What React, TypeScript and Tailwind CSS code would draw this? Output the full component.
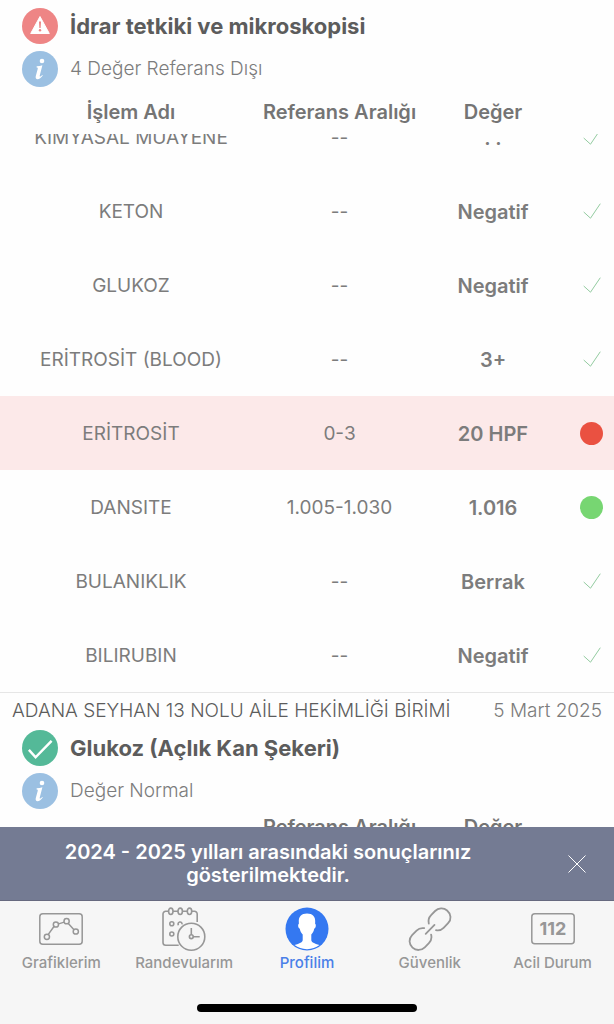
import type { ReactNode } from "react";

type Status = "check" | "red" | "green";

interface ResultRow {
  name: string;
  range: string;
  value: string;
  status: Status;
}

const urineResults: ResultRow[] = [
  { name: "KIMYASAL MUAYENE", range: "--", value: ". .", status: "check" },
  { name: "KETON", range: "--", value: "Negatif", status: "check" },
  { name: "GLUKOZ", range: "--", value: "Negatif", status: "check" },
  { name: "ERİTROSİT (BLOOD)", range: "--", value: "3+", status: "check" },
  { name: "ERİTROSİT", range: "0-3", value: "20 HPF", status: "red" },
  { name: "DANSITE", range: "1.005-1.030", value: "1.016", status: "green" },
  { name: "BULANIKLIK", range: "--", value: "Berrak", status: "check" },
  { name: "BILIRUBIN", range: "--", value: "Negatif", status: "check" },
];

function WarningIcon() {
  return (
    <svg viewBox="0 0 36 36" className="size-9 shrink-0" aria-hidden="true">
      <circle cx="18" cy="18" r="18" fill="#ee8585" />
      <path d="M18 8.5 27.3 25.5H8.7Z" fill="#fff" stroke="#fff" strokeWidth="1" strokeLinejoin="round" />
      <path d="M17 13.5h2l-.4 6.5h-1.2z" fill="#ee8585" />
      <circle cx="18" cy="22.3" r="1.2" fill="#ee8585" />
    </svg>
  );
}

function InfoIcon() {
  return (
    <svg viewBox="0 0 36 36" className="size-9 shrink-0" aria-hidden="true">
      <circle cx="18" cy="18" r="18" fill="#9bc0e2" />
      <circle cx="20" cy="10" r="2.3" fill="#fff" />
      <path
        d="M14.8 15.2c2-.1 3.8-.4 5.6-1l-2.7 10.5c-.3 1.2.6 1.2 2.5-.7l.6.6c-1.8 2.4-3.5 3.6-5.2 3.6-1.7 0-2.3-1.2-1.8-3.1l1.9-7.2c.3-1.2-.1-1.6-1.3-1.7z"
        fill="#fff"
      />
    </svg>
  );
}

function SuccessIcon() {
  return (
    <svg viewBox="0 0 36 36" className="size-9 shrink-0" aria-hidden="true">
      <circle cx="18" cy="18" r="18" fill="#54b998" />
      <path d="M6.9 19.900 13.600 27.300 29.600 10.900" fill="none" stroke="#fff" strokeWidth="2.500" />
    </svg>
  );
}

function StatusMark({ status }: { status: Status }) {
  if (status === "check") {
    return (
      <svg viewBox="0 0 18 16" className="mx-auto h-4 w-[18px]" fill="none" stroke="#93cba0" aria-label="Normal">
        <path d="M.7 9 7.5 15.2 17.3.7" />
      </svg>
    );
  }
  return (
    <span className={`mx-auto block size-[23px] rounded-full ${status === "red" ? "bg-[#ea5141]" : "bg-[#77d672]"}`} />
  );
}

function TableHead({ compact = false }: { compact?: boolean }) {
  return (
    <thead className="block">
      <tr className={`table w-full table-fixed text-xl text-[#747474] ${compact ? "h-9" : "h-11"}`}>
        <th scope="col" className="font-semibold">{!compact && "İşlem Adı"}</th>
        <th scope="col" className="w-[155px] font-semibold whitespace-nowrap">Referans Aralığı</th>
        <th scope="col" className="w-[152px] font-semibold">Değer</th>
        <td className="w-[45px]" />
      </tr>
    </thead>
  );
}

function ResultTitle({ icon, title, note }: { icon: ReactNode; title: string; note: string }) {
  return (
    <div className="flex flex-col gap-[7px] pl-[22px]">
      <div className="flex items-center gap-3">
        {icon}
        <h2 className="text-[22px] leading-7 font-bold text-[#5c5c5c]">{title}</h2>
      </div>
      <div className="flex items-center gap-3">
        <InfoIcon />
        <p className="text-[19px] leading-7 font-light text-[#7c7c7c]">{note}</p>
      </div>
    </div>
  );
}

function ChartIcon() {
  return (
    <svg viewBox="0 0 44 44" className="size-11" fill="none" stroke="currentColor" strokeWidth="1.5" aria-hidden="true">
      <rect x=".8" y="6.8" width="42.4" height="30.4" rx="3" />
      <path d="m9.3 27.4 6.2-8.6M19.6 16.9l5.6-1.8M29.3 16.5l5.7 6.3" />
      <circle cx="7.9" cy="29.8" r="2.6" />
      <circle cx="16.9" cy="17.5" r="2.6" />
      <circle cx="27.6" cy="14.2" r="2.6" />
      <circle cx="36.8" cy="24.5" r="2.6" />
    </svg>
  );
}

function CalendarIcon() {
  return (
    <svg viewBox="0 0 44 44" className="size-11" fill="none" stroke="currentColor" strokeWidth="1.6" aria-hidden="true">
      <path d="M6.6 4.3H3.7A2.7 2.7 0 0 0 1 7v28.6a2.7 2.7 0 0 0 2.7 2.7h13M11 4.3h5M20.4 4.3h4.9M29.7 4.3h2.8A2.7 2.7 0 0 1 35.2 7v8" />
      <ellipse cx="8.8" cy="4.3" rx="2.2" ry="3.2" />
      <ellipse cx="18.2" cy="4.3" rx="2.2" ry="3.2" />
      <ellipse cx="27.5" cy="4.3" rx="2.2" ry="3.2" />
      <circle cx="9.8" cy="16.7" r="2" />
      <circle cx="9.8" cy="27" r="2" />
      <path d="M16.5 18.2a2 2 0 1 1 3.5-.8" />
      <circle cx="29.3" cy="29.7" r="13.5" />
      <circle cx="29.3" cy="29.7" r="1.9" />
      <path d="M29.3 27.8v-6.8M31.2 29.7h6.5" />
    </svg>
  );
}

function ProfileIcon() {
  return (
    <svg viewBox="0 0 44 44" className="size-11" aria-hidden="true">
      <circle cx="22" cy="22" r="21.5" fill="#3478f1" />
      <path
        d="M22 6.5c-5.6 0-8.500 3.200-8.200 8.200l.1 2c-1.200.5-.9 4.200.9 5 .4 2.500 1.400 4.400 2.900 5.700v5.600c0 2.400-2.900 3.300-8.200 5.100A20.300 20.300 0 0 0 22 42.200a20.300 20.300 0 0 0 12.500-4.100c-5.300-1.800-8.200-2.700-8.200-5.100v-5.600c1.500-1.300 2.500-3.200 2.900-5.700 1.800-.8 2.100-4.500.9-5l.1-2c.3-5-2.600-8.200-8.200-8.200Z"
        fill="#fff"
      />
    </svg>
  );
}

function LinkIcon() {
  return (
    <svg viewBox="0 0 44 44" className="size-11" fill="none" stroke="currentColor" strokeWidth="1.8" strokeLinecap="round" aria-hidden="true">
      <path d="M20.8 16.6c-.7-3.1-.1-6.1 2.3-8.5l4-4.1c3.2-3.2 8.5-3.600 12-.5 4.2 3.6 4.5 9 1 12.7l-4.5 4.7c-2.2 2.2-5 2.9-7.6 2.3" />
      <path d="M16.2 21.2c-2.7-.5-5.5.2-7.6 2.4l-4.5 4.6c-3.5 3.7-3.3 9.1.4 12.5 3.6 3.2 8.9 3 12.3-.4l4.1-4.2c2.4-2.4 3-5.5 2.2-8.5" />
      <path d="m17.7 26.9 8.8-9" />
    </svg>
  );
}

function EmergencyIcon() {
  return (
    <svg viewBox="0 0 44 44" className="size-11" aria-hidden="true">
      <rect x=".8" y="6.8" width="42.4" height="30" rx="3" fill="none" stroke="currentColor" strokeWidth="1.5" />
      <text x="22" y="28" textAnchor="middle" fontSize="18" fontWeight="700" fill="currentColor">
        112
      </text>
    </svg>
  );
}

const tabs = [
  { label: "Grafiklerim", icon: <ChartIcon /> },
  { label: "Randevularım", icon: <CalendarIcon /> },
  { label: "Profilim", icon: <ProfileIcon />, active: true },
  { label: "Güvenlik", icon: <LinkIcon /> },
  { label: "Acil Durum", icon: <EmergencyIcon /> },
];

export default function App() {
  return (
    <div className="flex h-screen flex-col overflow-hidden bg-[#fefefe] font-[Inter,sans-serif]">
      <main className="min-h-0 flex-1 overflow-hidden">
        <section className="border-b border-[#e6e6e6] pt-2">
          <ResultTitle icon={<WarningIcon />} title="İdrar tetkiki ve mikroskopisi" note="4 Değer Referans Dışı" />
          <table className="mt-[3px] block w-full">
            <TableHead />
            <tbody className="flex h-[558px] flex-col justify-end overflow-hidden">
              {urineResults.map((row) => (
                <tr
                  key={row.name}
                  className={`table h-[74px] w-full shrink-0 table-fixed text-center text-[19px] leading-7 text-[#7c7c7c] ${
                    row.status === "red" ? "bg-[#fce9e9]" : ""
                  }`}
                >
                  <td className="pt-0.5">{row.name}</td>
                  <td className="w-[155px] pt-0.5">{row.range}</td>
                  <td className="w-[152px] pt-0.5 text-xl font-semibold">{row.value}</td>
                  <td className="w-[45px]">
                    <StatusMark status={row.status} />
                  </td>
                </tr>
              ))}
            </tbody>
          </table>
        </section>

        <section>
          <div className="flex items-center justify-between px-3 pt-1 pb-[5px] text-[19px] leading-7 font-light">
            <p className="text-[#5c5c5c]">ADANA SEYHAN 13 NOLU AİLE HEKİMLİĞİ BİRİMİ</p>
            <time dateTime="2025-03-05" className="text-[#7c7c7c]">5 Mart 2025</time>
          </div>
          <ResultTitle icon={<SuccessIcon />} title="Glukoz (Açlık Kan Şekeri)" note="Değer Normal" />
          <table className="block w-full">
            <TableHead compact />
          </table>
        </section>
      </main>

      <div className="flex shrink-0 items-center border-b border-[#66697f] bg-[#747b93] pt-[14px] pb-[13px] text-white">
        <p className="flex-1 pr-5 text-center text-xl leading-[23px] font-semibold">
          2024 - 2025 yılları arasındaki sonuçlarınız
          <br />
          gösterilmektedir.
        </p>
        <button type="button" aria-label="Kapat" className="mr-4 flex size-[42px] items-center justify-center">
          <svg viewBox="0 0 18 18" className="size-[18px]" stroke="currentColor" strokeWidth="1" aria-hidden="true">
            <path d="m.5.5 17 17M17.5.5l-17 17" />
          </svg>
        </button>
      </div>

      <footer className="shrink-0 bg-[#f6f6f6]">
        <nav className="grid grid-cols-5 pt-[6px]">
          {tabs.map((tab) => (
            <a
              key={tab.label}
              href="#"
              aria-current={tab.active ? "page" : undefined}
              className={`flex flex-col items-center gap-0.5 text-[15px] leading-5 font-medium whitespace-nowrap ${
                tab.active ? "text-[#4a80e8]" : "text-[#979797]"
              }`}
            >
              {tab.icon}
              {tab.label}
            </a>
          ))}
        </nav>
        <div className="mx-auto mt-[31px] mb-3 h-2 w-[220px] rounded-full bg-black" />
      </footer>
    </div>
  );
}
